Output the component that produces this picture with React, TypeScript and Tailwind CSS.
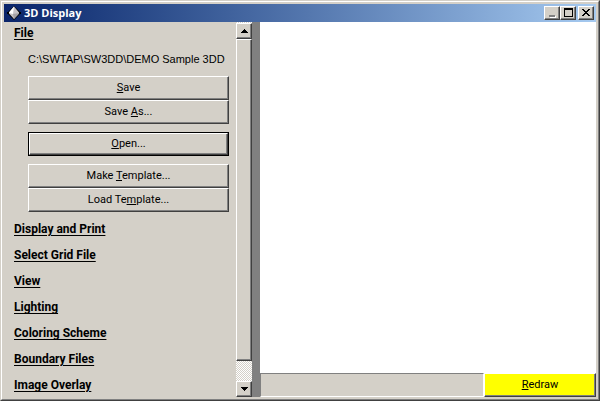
import { useState } from "react";
import type { ReactNode } from "react";

const sections = [
  "Display and Print",
  "Select Grid File",
  "View",
  "Lighting",
  "Coloring Scheme",
  "Boundary Files",
  "Image Overlay",
];

const raised =
  "border border-t-white border-l-white border-r-[#404040] border-b-[#404040] shadow-[inset_-1px_-1px_0_#808080]";

function PushButton({ children, isDefault }: { children: ReactNode; isDefault?: boolean }) {
  if (isDefault) {
    return (
      <button className="block w-full h-6 border border-black text-center">
        <span className={`flex h-full items-center justify-center ${raised}`}>
          <span>{children}</span>
        </span>
      </button>
    );
  }
  return <button className={`block w-full h-6 text-center ${raised}`}>{children}</button>;
}

function SectionTitle({ title, onClick }: { title: string; onClick: () => void }) {
  return (
    <button
      onClick={onClick}
      className="block text-[12px] leading-4 font-bold underline underline-offset-2 text-left whitespace-nowrap"
    >
      {title}
    </button>
  );
}

function AppIcon() {
  return (
    <svg width="14" height="14" viewBox="0 0 14 14">
      <path d="M7 0l7 7-7 7-7-7z" fill="#000" />
      <path d="M7 0.5L12.5 7 7 13 1.5 7z" fill="#c6c3c6" />
      <path d="M7 0.5L1.5 7 6 8z" fill="#fff" />
      <path d="M6 8l6.5-1L7 13z" fill="#a5a2a5" />
      <path d="M0 6h2v2H0zM12 6h2v2h-2z" fill="#000" />
    </svg>
  );
}

function TitleBar() {
  const btn = `flex h-[14px] w-4 items-center justify-center bg-[#d4d0c8] ${raised}`;
  return (
    <header className="flex h-[18px] shrink-0 items-center bg-linear-to-r from-[#0a246a] to-[#a6caf0] pl-[3px] pr-[2px]">
      <AppIcon />
      <h1 className="ml-[3px] flex-1 font-['Open_Sans',sans-serif] text-[11px] leading-4 font-bold text-white">3D Display</h1>
      <button className={btn} aria-label="Minimize">
        <svg width="12" height="12" viewBox="0 0 12 12" shapeRendering="crispEdges">
          <path d="M4 10h6v1H4zM9 9h1v1H9z" fill="#fff" />
          <path d="M3 8h6v2H3z" fill="#808080" />
        </svg>
      </button>
      <button className={btn} aria-label="Maximize">
        <svg width="12" height="12" viewBox="0 0 12 12" shapeRendering="crispEdges">
          <path d="M2 1h9v9H2zM3 3v6h7V3z" fill="#000" fillRule="evenodd" />
        </svg>
      </button>
      <button className={`ml-[2px] ${btn}`} aria-label="Close">
        <svg width="12" height="12" viewBox="0 0 12 12" shapeRendering="crispEdges">
          <path
            d="M2 2h2v1h1v1h2V3h1V2h2v1H9v1H8v1H7v1h1v1h1v1h1v1H8V8H7V7H5v1H4v1H2V8h1V7h1V6h1V5H4V4H3V3H2z"
            fill="#000"
          />
        </svg>
      </button>
    </header>
  );
}

function ScrollBar() {
  const arrow = `flex h-4 w-full shrink-0 items-center justify-center bg-[#d4d0c8] ${raised}`;
  return (
    <div className="flex w-4 shrink-0 flex-col bg-[repeating-conic-gradient(#ffffff_0_25%,#d4d0c8_0_50%)] bg-[length:2px_2px] pt-px">
      <button className={arrow} aria-label="Scroll up">
        <svg width="7" height="4" viewBox="0 0 7 4" shapeRendering="crispEdges">
          <path d="M3 0h1v1h1v1h1v1h1v1H0V3h1V2h1V1h1z" fill="#000" />
        </svg>
      </button>
      <div className={`grow-[16] bg-[#d4d0c8] ${raised}`} />
      <div className="grow" />
      <button className={arrow} aria-label="Scroll down">
        <svg width="7" height="4" viewBox="0 0 7 4" shapeRendering="crispEdges">
          <path d="M0 0h7v1H6v1H5v1H4v1H3V3H2V2H1V1H0z" fill="#000" />
        </svg>
      </button>
    </div>
  );
}

export default function App() {
  const [fileOpen, setFileOpen] = useState(true);
  const [active, setActive] = useState("");

  return (
    <div className="flex h-screen flex-col border border-t-[#d4d0c8] border-l-[#d4d0c8] border-r-[#404040] border-b-[#404040] bg-[#d4d0c8] font-['Roboto',sans-serif] text-[11px] leading-4 text-black">
      <div className="flex min-h-0 flex-1 flex-col border border-t-white border-l-white border-r-[#808080] border-b-[#808080] p-[2px]">
        <TitleBar />
        <div className="flex min-h-0 flex-1">
          <aside className="w-[232px] shrink-0 overflow-hidden">
            <div className="flex h-[22px] items-center pl-[10px]">
              <SectionTitle title="File" onClick={() => setFileOpen(!fileOpen)} />
            </div>
            {fileOpen && (
              <div className="mb-1 pl-6 pr-[7px]">
                <p className="mb-[2px] flex h-[30px] items-center whitespace-nowrap font-['Liberation_Sans',sans-serif]">
                  C:\SWTAP\SW3DD\DEMO Sample 3DD
                </p>
                <div className="flex flex-col gap-2">
                  <div>
                    <PushButton><u>S</u>ave</PushButton>
                    <PushButton>Save <u>A</u>s...</PushButton>
                  </div>
                  <PushButton isDefault><u>O</u>pen...</PushButton>
                  <div>
                    <PushButton>Make <u>T</u>emplate...</PushButton>
                    <PushButton>Load Te<u>m</u>plate...</PushButton>
                  </div>
                </div>
              </div>
            )}
            {sections.map((title) => (
              <div key={title} className="flex h-[26px] items-center pl-[10px]">
                <SectionTitle title={title} onClick={() => setActive(title)} />
              </div>
            ))}
          </aside>
          <ScrollBar />
          <div className="w-2 shrink-0 bg-[#808080]" />
          <main className="flex min-w-0 flex-1 flex-col">
            <div className="flex-1 bg-white" aria-label={active || undefined} />
            <div className="flex h-6 shrink-0">
              <div className="flex-1 border border-t-[#808080] border-l-[#808080] border-r-white border-b-white" />
              <button className={`w-28 bg-[#ffff00] ${raised}`}>
                <u>R</u>edraw
              </button>
            </div>
          </main>
        </div>
      </div>
    </div>
  );
}
